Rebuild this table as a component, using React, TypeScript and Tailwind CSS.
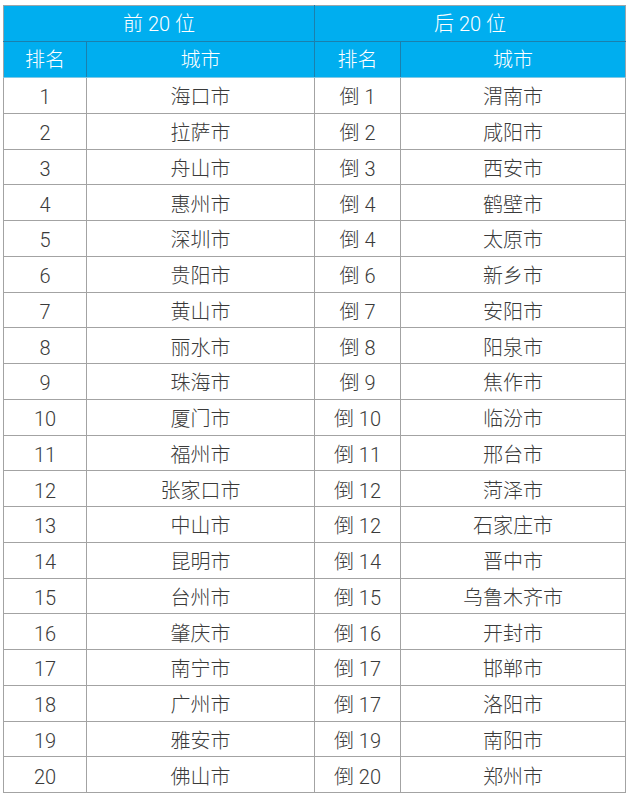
import React from 'react';

const rows: [string, string, string, string][] = [
  ['1', '海口市', '倒 1', '渭南市'],
  ['2', '拉萨市', '倒 2', '咸阳市'],
  ['3', '舟山市', '倒 3', '西安市'],
  ['4', '惠州市', '倒 4', '鹤壁市'],
  ['5', '深圳市', '倒 4', '太原市'],
  ['6', '贵阳市', '倒 6', '新乡市'],
  ['7', '黄山市', '倒 7', '安阳市'],
  ['8', '丽水市', '倒 8', '阳泉市'],
  ['9', '珠海市', '倒 9', '焦作市'],
  ['10', '厦门市', '倒 10', '临汾市'],
  ['11', '福州市', '倒 11', '邢台市'],
  ['12', '张家口市', '倒 12', '菏泽市'],
  ['13', '中山市', '倒 12', '石家庄市'],
  ['14', '昆明市', '倒 14', '晋中市'],
  ['15', '台州市', '倒 15', '乌鲁木齐市'],
  ['16', '肇庆市', '倒 16', '开封市'],
  ['17', '南宁市', '倒 17', '邯郸市'],
  ['18', '广州市', '倒 17', '洛阳市'],
  ['19', '雅安市', '倒 19', '南阳市'],
  ['20', '佛山市', '倒 20', '郑州市'],
];

export default function App() {
  const th = 'border border-[#1b80ad] bg-[#00aeef] text-white font-light text-center p-0';
  const td = 'border border-[#a3a3a3] text-[#3a3a3a] font-light text-center p-0 pt-[4px]';

  return (
    <div className="w-[628px] h-[799px] bg-white pt-[5px] pl-[3px]" style={{ fontFamily: 'Roboto, "Noto Sans CJK SC", sans-serif' }}>
      <table className="border-collapse table-fixed w-[622px] text-[20px] leading-none">
        <colgroup>
          <col className="w-[83px]" />
          <col className="w-[228px]" />
          <col className="w-[86px]" />
          <col className="w-[225px]" />
        </colgroup>
        <thead>
          <tr className="h-[36px]">
            <th colSpan={2} className={`${th} border-t-[#9aa5ab] border-l-[#9aa5ab]`}>前 20 位</th>
            <th colSpan={2} className={`${th} border-t-[#9aa5ab] border-r-[#9aa5ab]`}>后 20 位</th>
          </tr>
          <tr className="h-[36px]">
            <th className={`${th} border-l-[#9aa5ab] border-b-[#7fc9e6]`}>排名</th>
            <th className={`${th} border-b-[#7fc9e6]`}>城市</th>
            <th className={`${th} border-b-[#7fc9e6]`}>排名</th>
            <th className={`${th} border-r-[#9aa5ab] border-b-[#7fc9e6]`}>城市</th>
          </tr>
        </thead>
        <tbody>
          {rows.map((r, i) => (
            <tr key={i} className="h-[35.75px]">
              <td className={td}>{r[0]}</td>
              <td className={td}>{r[1]}</td>
              <td className={td}>{r[2]}</td>
              <td className={td}>{r[3]}</td>
            </tr>
          ))}
        </tbody>
      </table>
    </div>
  );
}
